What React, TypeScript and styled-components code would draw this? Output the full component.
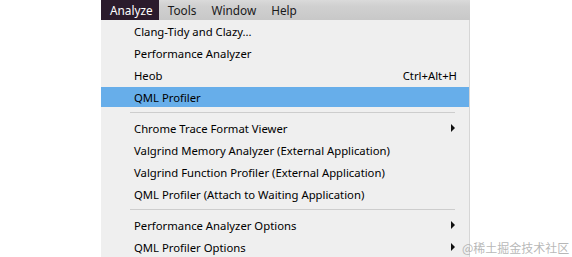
import * as React from 'react';
import styled, { createGlobalStyle } from 'styled-components';

const GlobalStyle = createGlobalStyle`
  html, body {
    margin: 0;
    padding: 0;
    background: #ffffff;
  }
  body {
    font-family: 'Noto Sans', 'Liberation Sans', sans-serif;
    font-size: 11.3px;
    color: #000000;
  }
`;

const Page = styled.div`
  position: relative;
  width: 572px;
  height: 257px;
  overflow: hidden;
  padding-left: 101px;
  box-sizing: border-box;
`;

const MenuBar = styled.div`
  display: flex;
  align-items: stretch;
  width: 369px;
  height: 20px;
  background: linear-gradient(180deg, #dadada 0%, #d0d0d0 30%, #c8c8c8 100%);
`;

const BarItem = styled.div<{ $active?: boolean }>`
  display: flex;
  align-items: center;
  padding: 0 6px 0 9px;
  font-size: 11.8px;
  color: ${(p) => (p.$active ? '#ffffff' : '#1a1a1a')};
  background: ${(p) => (p.$active ? '#2b1b2c' : 'transparent')};
`;

const Dropdown = styled.div`
  width: 368px;
  background: #efefef;
  border-right: 1px solid #d6d6d6;
  padding-bottom: 4px;
`;

const Row = styled.div<{ $selected?: boolean }>`
  display: flex;
  align-items: center;
  height: 22px;
  padding: 0 12px 0 33px;
  box-sizing: border-box;
  background-color: ${(p) => (p.$selected ? '#67aeea' : 'transparent')};
  border-top: 1px solid #efefef;
  border-bottom: 1px solid #efefef;
`;

const Label = styled.span`
  flex: 1;
  white-space: nowrap;
`;

const Shortcut = styled.span`
  white-space: nowrap;
`;

const Arrow = styled.span`
  width: 0;
  height: 0;
  border-top: 4px solid transparent;
  border-bottom: 4px solid transparent;
  border-left: 4px solid #111111;
  margin-right: 2px;
`;

const Separator = styled.div`
  height: 9px;
  display: flex;
  align-items: center;
  padding: 0 14px 0 29px;
  &::after {
    content: '';
    flex: 1;
    height: 1px;
    background: #cdcdcd;
  }
`;

const Watermark = styled.div`
  position: absolute;
  left: 462px;
  top: 239px;
  font-family: 'Noto Sans CJK SC', 'Noto Sans', sans-serif;
  font-size: 12px;
  color: rgba(160, 160, 160, 0.75);
  white-space: nowrap;
`;

type Item =
  | { kind: 'item'; label: string; shortcut?: string; submenu?: boolean; selected?: boolean }
  | { kind: 'sep' };

const items: Item[] = [
  { kind: 'item', label: 'Clang-Tidy and Clazy...' },
  { kind: 'item', label: 'Performance Analyzer' },
  { kind: 'item', label: 'Heob', shortcut: 'Ctrl+Alt+H' },
  { kind: 'item', label: 'QML Profiler', selected: true },
  { kind: 'sep' },
  { kind: 'item', label: 'Chrome Trace Format Viewer', submenu: true },
  { kind: 'item', label: 'Valgrind Memory Analyzer (External Application)' },
  { kind: 'item', label: 'Valgrind Function Profiler (External Application)' },
  { kind: 'item', label: 'QML Profiler (Attach to Waiting Application)' },
  { kind: 'sep' },
  { kind: 'item', label: 'Performance Analyzer Options', submenu: true },
  { kind: 'item', label: 'QML Profiler Options', submenu: true },
];

const App: React.FC = () => {
  return (
    <Page>
      <GlobalStyle />
      <MenuBar>
        <BarItem $active>Analyze</BarItem>
        <BarItem>Tools</BarItem>
        <BarItem>Window</BarItem>
        <BarItem>Help</BarItem>
      </MenuBar>
      <Dropdown>
        {items.map((it, i) =>
          it.kind === 'sep' ? (
            <Separator key={i} />
          ) : (
            <Row key={i} $selected={it.selected}>
              <Label>{it.label}</Label>
              {it.shortcut && <Shortcut>{it.shortcut}</Shortcut>}
              {it.submenu && <Arrow />}
            </Row>
          )
        )}
      </Dropdown>
      <Watermark>@稀土掘金技术社区</Watermark>
    </Page>
  );
};

export default App;
